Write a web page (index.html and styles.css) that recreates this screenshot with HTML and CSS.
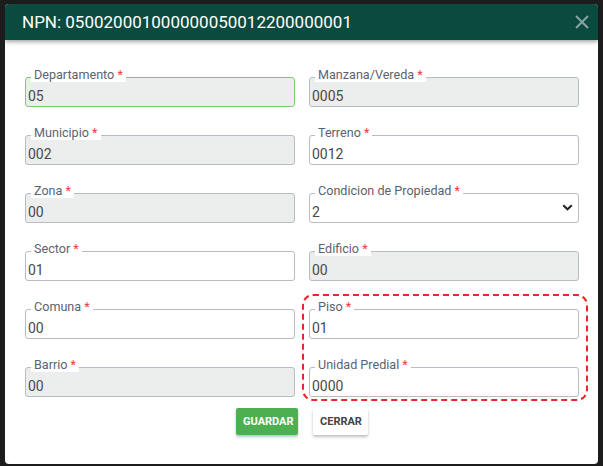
FILE: index.html
```html
<!DOCTYPE html>
<html>
<head>
<meta charset="utf-8">
<link rel="stylesheet" href="styles.css">
</head>
<body>
<div class="dialog">
  <div class="header">
    <span class="title">NPN: 050020001000000050012200000001</span>
    <svg class="close" width="16" height="16" viewBox="0 0 16 16"><path d="M2 2 L14 14 M14 2 L2 14" stroke="#86a69e" stroke-width="2" fill="none"/></svg>
  </div>
  <div class="body">
    <div class="grid">
      <div class="field disabled valid"><span class="lbl">Departamento <b>*</b></span><div class="box">05</div></div>
      <div class="field disabled"><span class="lbl">Manzana/Vereda <b>*</b></span><div class="box">0005</div></div>
      <div class="field disabled"><span class="lbl">Municipio <b>*</b></span><div class="box">002</div></div>
      <div class="field"><span class="lbl">Terreno <b>*</b></span><div class="box">0012</div></div>
      <div class="field disabled"><span class="lbl">Zona <b>*</b></span><div class="box">00</div></div>
      <div class="field select"><span class="lbl">Condicion de Propiedad <b>*</b></span><div class="box">2<svg class="chev" width="11" height="7" viewBox="0 0 11 7"><path d="M1.2 1.2 L5.5 5.3 L9.8 1.2" stroke="#222" stroke-width="2" fill="none"/></svg></div></div>
      <div class="field"><span class="lbl">Sector <b>*</b></span><div class="box">01</div></div>
      <div class="field disabled"><span class="lbl">Edificio <b>*</b></span><div class="box">00</div></div>
      <div class="field"><span class="lbl">Comuna <b>*</b></span><div class="box">00</div></div>
      <div class="field"><span class="lbl">Piso <b>*</b></span><div class="box">01</div></div>
      <div class="field disabled"><span class="lbl">Barrio <b>*</b></span><div class="box">00</div></div>
      <div class="field"><span class="lbl">Unidad Predial <b>*</b></span><div class="box">0000</div></div>
      <div class="highlight"></div>
    </div>
    <div class="actions">
      <button class="btn save">GUARDAR</button>
      <button class="btn close-btn">CERRAR</button>
    </div>
  </div>
</div>
</body>
</html>
```
FILE: styles.css
```css
html, body {
  margin: 0;
  padding: 0;
  background: #1c1c1c;
  font-family: Roboto, "Liberation Sans", sans-serif;
}
body {
  padding: 4px 5px 2px 5px;
  width: 603px;
  height: 466px;
  box-sizing: border-box;
}
.dialog {
  width: 593px;
  height: 460px;
  background: #fff;
  border-radius: 4px;
  overflow: hidden;
}
.header {
  height: 36px;
  background: #0b4a3f;
  display: flex;
  align-items: center;
  justify-content: space-between;
  padding: 0 8px 0 17px;
  box-shadow: 0 2px 4px rgba(0,0,0,0.35);
  position: relative;
}
.title {
  color: #fff;
  font-size: 17px;
}
.close {
  display: block;
}
.body {
  padding: 37px 19px 0 20px;
}
.grid {
  display: grid;
  grid-template-columns: 270px 270px;
  column-gap: 14px;
  row-gap: 28px;
  position: relative;
}
.field {
  position: relative;
}
.box {
  height: 30px;
  box-sizing: border-box;
  border: 1px solid #b8bcc3;
  border-radius: 3px;
  background: #fff;
  padding: 9px 0 0 2px;
  font-size: 14px;
  line-height: 18px;
  color: #4a4a4a;
  position: relative;
}
.disabled .box {
  background: #eceeed;
}
.valid .box {
  border-color: #7ccc70;
}
.lbl {
  position: absolute;
  left: 6px;
  top: -9px;
  z-index: 1;
  background: #fff;
  padding: 0 3px;
  font-size: 12.6px;
  line-height: 14px;
  color: #5c6370;
}
.lbl b {
  color: #ef3b3b;
  font-weight: normal;
}
.chev {
  position: absolute;
  right: 5px;
  top: 10px;
}
.highlight {
  position: absolute;
  left: 277px;
  top: 217px;
  width: 286px;
  height: 107px;
  box-sizing: border-box;
  border: 2px dashed #e8262b;
  border-radius: 11px;
  pointer-events: none;
}
.actions {
  display: flex;
  justify-content: center;
  gap: 15px;
  margin-top: 11px;
}
.btn {
  border: none;
  border-radius: 2px;
  font-family: Roboto, "Liberation Sans", sans-serif;
  font-weight: bold;
  font-size: 11px;
  height: 27px;
  padding: 0 7px;
  box-shadow: 0 2px 3px rgba(0,0,0,0.25);
}
.save {
  background: #4caf50;
  color: #fff;
  width: 62px;
}
.close-btn {
  background: #fff;
  color: #444;
  width: 55px;
}
```
